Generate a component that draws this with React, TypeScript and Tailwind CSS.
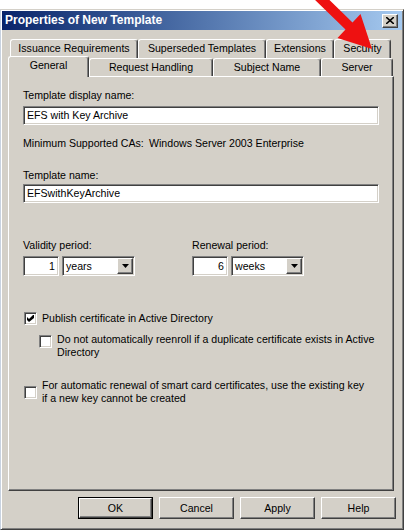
const raised =
  "border border-t-white border-l-white border-r-[#404040] border-b-[#404040] shadow-[inset_-1px_-1px_#808080,inset_1px_1px_#d4d0c8]";
const sunken =
  "border border-t-[#808080] border-l-[#808080] border-r-white border-b-white shadow-[inset_1px_1px_#404040,inset_-1px_-1px_#d4d0c8]";

function Tab({ label, w, top }: { label: string; w: number; top?: boolean }) {
  return (
    <div
      style={{ width: w }}
      className={`flex h-[18px] items-center justify-center rounded-t-[3px] border-t border-l border-r border-t-white border-l-white border-r-[#404040] shadow-[inset_-1px_0_#808080] ${top ? "h-[19px] items-start pt-[2px]" : ""}`}
    >
      {label}
    </div>
  );
}

function Check({ checked }: { checked?: boolean }) {
  return (
    <div className={`flex h-[13px] w-[13px] shrink-0 items-center justify-center bg-white ${sunken}`}>
      {checked && (
        <svg width="9" height="9" viewBox="0 0 9 9">
          <path d="M1 3 L3 5 L7 1 L8 1 L8 4 L3 8 L1 6 Z" fill="#000" />
        </svg>
      )}
    </div>
  );
}

function Combo({ value }: { value: string }) {
  return (
    <div className={`flex h-[20px] w-[73px] items-center bg-white pl-[3px] pr-[1px] ${sunken}`}>
      <span className="flex-1">{value}</span>
      <div className={`flex h-[16px] w-[16px] items-center justify-center bg-[#d4d0c8] ${raised}`}>
        <svg width="7" height="4" viewBox="0 0 7 4">
          <path d="M0 0 H7 L3.5 4 Z" fill="#000" />
        </svg>
      </div>
    </div>
  );
}

function NumBox({ value }: { value: string }) {
  return (
    <div className={`flex h-[20px] w-[36px] items-center justify-end bg-white pr-[3px] ${sunken}`}>
      {value}
    </div>
  );
}

function Btn({ label, def }: { label: string; def?: boolean }) {
  return (
    <div className={`h-[22px] w-[75px] ${def ? "border border-black" : ""}`}>
      <div className={`flex h-full w-full items-center justify-center bg-[#d4d0c8] ${raised}`}>{label}</div>
    </div>
  );
}

export default function App() {
  return (
    <div className="relative h-[531px] w-[404px] overflow-hidden bg-white pt-[9px] text-[10.6px] leading-[13px] text-black [font-family:'Liberation_Sans',Arial,sans-serif]">
      <div className="h-[521px] w-[404px] border border-t-[#d4d0c8] border-l-[#c8d2e0] border-r-[#404040] border-b-[#404040] bg-[#d4d0c8] p-[1px] shadow-[inset_1px_1px_#fff,inset_-1px_-1px_#808080]">
        {/* title bar */}
        <div className="flex h-[19px] items-center justify-between bg-gradient-to-r from-[#0a246a] to-[#a6caf0] pl-[3px] pr-[4px] text-[12px] font-bold text-white">
          <span>Properties of New Template</span>
          <div className={`flex h-[14px] w-[16px] items-center justify-center bg-[#d4d0c8] ${raised}`}>
            <svg width="8" height="7" viewBox="0 0 8 7">
              <path d="M0 0 L8 7 M8 0 L0 7" stroke="#000" strokeWidth="1.6" />
            </svg>
          </div>
        </div>

        {/* tabs */}
        <div className="mt-[9px] flex h-[19px] pl-[8px]">
          <Tab label="Issuance Requirements" w={128} top />
          <Tab label="Superseded Templates" w={128} top />
          <Tab label="Extensions" w={68} top />
          <Tab label="Security" w={57} top />
        </div>
        <div className="mt-[-2px] flex h-[20px] items-end pl-[6px]">
          <div className="relative z-10 mb-[-1px] flex h-[21px] w-[81px] items-start justify-center rounded-t-[3px] border-t border-l border-r border-t-white border-l-white border-r-[#404040] bg-[#d4d0c8] pt-[2px] shadow-[inset_-1px_0_#808080]">
            General
          </div>
          <Tab label="Request Handling" w={124} />
          <Tab label="Subject Name" w={108} />
          <Tab label="Server" w={72} />
        </div>

        {/* panel */}
        <div className="ml-[6px] h-[415px] w-[386px] border border-t-white border-l-white border-r-[#404040] border-b-[#404040] pl-[14px] shadow-[inset_-1px_-1px_#808080]">
          <div className="mt-[12px]">Template display name:</div>
          <div className={`mt-[4px] flex h-[19px] w-[356px] items-center bg-white pl-[3px] ${sunken}`}>EFS with Key Archive</div>

          <div className="mt-[12px] flex">
            <span className="w-[126px] shrink-0">Minimum Supported CAs:</span>
            <span>Windows Server 2003 Enterprise</span>
          </div>

          <div className="mt-[19px]">Template name:</div>
          <div className={`mt-[2px] flex h-[19px] w-[356px] items-center bg-white pl-[3px] ${sunken}`}>EFSwithKeyArchive</div>

          <div className="mt-[36px] flex">
            <div className="w-[169px]">
              <div>Validity period:</div>
              <div className="mt-[4px] flex gap-[3px]">
                <NumBox value="1" />
                <Combo value="years" />
              </div>
            </div>
            <div>
              <div>Renewal period:</div>
              <div className="mt-[4px] flex gap-[3px]">
                <NumBox value="6" />
                <Combo value="weeks" />
              </div>
            </div>
          </div>

          <div className="mt-[36px] ml-[1px] flex items-center gap-[5px]">
            <Check checked />
            <span>Publish certificate in Active Directory</span>
          </div>

          <div className="mt-[8px] ml-[16px] flex gap-[5px]">
            <div className="pt-[2px]">
              <Check />
            </div>
            <div>
              <div>Do not automatically reenroll if a duplicate certificate exists in Active</div>
              <div>Directory</div>
            </div>
          </div>

          <div className="mt-[20px] ml-[1px] flex items-center gap-[5px]">
            <Check />
            <div>
              <div>For automatic renewal of smart card certificates, use the existing key</div>
              <div>if a new key cannot be created</div>
            </div>
          </div>
        </div>

        {/* buttons */}
        <div className="mt-[6px] flex justify-end gap-[6px] pr-[6px]">
          <Btn label="OK" def />
          <Btn label="Cancel" />
          <Btn label="Apply" />
          <Btn label="Help" />
        </div>
      </div>

      {/* red annotation arrow */}
      <svg className="pointer-events-none absolute left-0 top-0 z-20" width="404" height="70" viewBox="0 0 404 70">
        <polygon
          points="315.5,-13.6 352.5,22.4 360.5,14 372,49 337.5,38 345.5,29.6 308.5,-6.4"
          fill="#ee1111"
        />
      </svg>
    </div>
  );
}
